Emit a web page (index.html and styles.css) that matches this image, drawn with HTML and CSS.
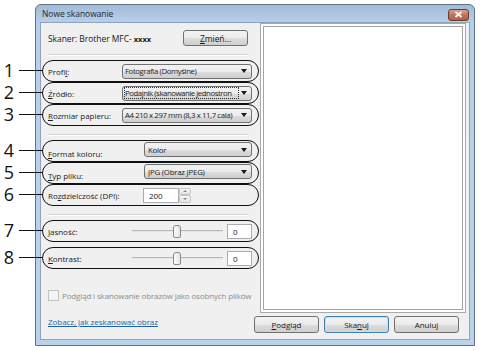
FILE: index.html
```html
<!DOCTYPE html>
<html>

<head>
    <title>Nowe skanowanie</title>
    <link rel="stylesheet" href="styles.css">
</head>

<body>
    <div class="window">
        <div class="titlebar">
            <span class="title">Nowe skanowanie</span>
            <div class="close">
                <svg width="9" height="7" viewBox="0 0 9 7">
                    <path d="M1.5 1 L7.5 6 M7.5 1 L1.5 6" stroke="#fff" stroke-width="1.8" />
                </svg>
            </div>
        </div>

        <div class="client">
            <div class="settings">
                <div class="scanner">
                    <span>Skaner: Brother MFC- <b>xxxx</b></span>
                    <div class="btn change"><u>Z</u>mień...</div>
                </div>
                <div class="sep"></div>

                <div class="callout">
                    <span class="num">1</span>
                    <span class="label">Profi<u>l</u>:</span>
                    <div class="combo wide"><span class="value">Fotografia (Domyślne)</span><span class="arrow"></span></div>
                </div>
                <div class="callout">
                    <span class="num">2</span>
                    <span class="label"><u>Ź</u>ródło:</span>
                    <div class="combo wide"><span class="value focus">Podajnik (skanowanie jednostron</span><span class="arrow"></span></div>
                </div>
                <div class="callout">
                    <span class="num">3</span>
                    <span class="label"><u>R</u>ozmiar papieru:</span>
                    <div class="combo wide"><span class="value">A4 210 x 297 mm (8,3 x 11,7 cala)</span><span class="arrow"></span></div>
                </div>
                <div class="sep"></div>

                <div class="callout">
                    <span class="num">4</span>
                    <span class="label low"><u>F</u>ormat koloru:</span>
                    <div class="combo"><span class="value">Kolor</span><span class="arrow"></span></div>
                </div>
                <div class="callout">
                    <span class="num">5</span>
                    <span class="label low"><u>T</u>yp pliku:</span>
                    <div class="combo"><span class="value">JPG (Obraz JPEG)</span><span class="arrow"></span></div>
                </div>
                <div class="callout">
                    <span class="num">6</span>
                    <span class="label">Ro<u>z</u>dzielczość (DPI):</span>
                    <div class="spin">
                        <div class="textbox">200</div>
                        <div class="spin-btns">
                            <div class="spin-btn"><span class="up"></span></div>
                            <div class="spin-btn"><span class="down"></span></div>
                        </div>
                    </div>
                </div>
                <div class="sep"></div>

                <div class="callout">
                    <span class="num">7</span>
                    <span class="label"><u>J</u>asność:</span>
                    <div class="slider"><span class="thumb"></span></div>
                    <div class="textbox small">0</div>
                </div>
                <div class="callout gap">
                    <span class="num">8</span>
                    <span class="label"><u>K</u>ontrast:</span>
                    <div class="slider"><span class="thumb"></span></div>
                    <div class="textbox small">0</div>
                </div>

                <div class="check">
                    <span class="box"></span>
                    <span>Pod<u>g</u>ląd i skanowanie obrazów jako osobnych plików</span>
                </div>
                <div class="link">Zobacz, jak zeskanować obraz</div>
            </div>

            <div class="side">
                <div class="preview">
                    <div class="preview-inner"></div>
                </div>
                <div class="actions">
                    <div class="btn"><u>P</u>odgląd</div>
                    <div class="btn default">Ska<u>n</u>uj</div>
                    <div class="btn">Anuluj</div>
                </div>
            </div>
        </div>
    </div>
</body>

</html>
```

FILE: styles.css
```css
body {
    margin: 0;
    width: 500px;
    height: 350px;
    background: #fff;
    font-family: "Open Sans", sans-serif;
    font-size: 8px;
    letter-spacing: -0.05px;
    color: #1a1a1a;
    overflow: hidden;
}

u {
    text-decoration: underline;
}

/* window frame */

.window {
    margin: 4px 0 0 35px;
    width: 440px;
    height: 342px;
    box-sizing: border-box;
    border: 1px solid #5f7186;
    border-radius: 6px 6px 0 0;
    padding: 0 4px 5px 4px;
    background: linear-gradient(#a4bdd7, #b7cfe8 18px, #bad2eb);
    display: flex;
    flex-direction: column;
}

.titlebar {
    height: 17px;
    display: flex;
    align-items: center;
    justify-content: space-between;
}

.title {
    padding-left: 2px;
    font-size: 8.5px;
    color: #1c2a3a;
}

.close {
    width: 19px;
    height: 10px;
    margin: 2px 1px 0 0;
    border: 1px solid #6b3a2c;
    border-radius: 3px;
    background: linear-gradient(#d9a592, #bd735d 50%, #ab6049);
    display: flex;
    align-items: center;
    justify-content: center;
}

.client {
    flex: 1;
    display: flex;
    background: #f0f0f0;
    border: 1px solid #8ea4bb;
}

/* left column */

.settings {
    width: 217px;
    display: flex;
    flex-direction: column;
    padding-left: 1px;
}

.scanner {
    display: flex;
    align-items: center;
    justify-content: space-between;
    margin: 7px 11px 0 6px;
    height: 16px;
    font-size: 8.5px;
}

.scanner b {
    font-weight: 700;
    font-size: 7.5px;
}

.sep {
    margin: 8px 10px 4px 6px;
    border-top: 1px solid #d5d5d5;
    border-bottom: 1px solid #fff;
}

.callout {
    position: relative;
    height: 22px;
    box-sizing: border-box;
    border: 1.5px solid #111;
    border-radius: 11px;
    display: flex;
    align-items: center;
    padding: 0 6px 0 5px;
}

.callout.gap {
    margin-top: 5px;
}

.callout::before {
    content: "";
    position: absolute;
    left: -24px;
    width: 23px;
    top: 9px;
    border-top: 1.5px solid #111;
}

.num {
    position: absolute;
    left: -43px;
    width: 18px;
    top: -4px;
    text-align: center;
    font-size: 18px;
    line-height: 26px;
    letter-spacing: 0;
    color: #111;
}

.label {
    flex: 1;
    white-space: nowrap;
}

.label.low {
    padding-top: 5px;
}

/* controls */

.btn {
    width: 65px;
    height: 17px;
    box-sizing: border-box;
    border: 1px solid #707070;
    border-radius: 3px;
    background: linear-gradient(#f2f2f2, #ebebeb 50%, #dddddd 51%, #cfcfcf);
    display: flex;
    align-items: center;
    justify-content: center;
}

.btn.change {
    height: 16px;
}

.btn.default {
    border-color: #3c7fb1;
    box-shadow: inset 0 0 0 1px #bde4f8;
}

.combo {
    width: 108px;
    height: 15px;
    box-sizing: border-box;
    border: 1px solid #707070;
    border-radius: 3px;
    background: linear-gradient(#f2f2f2, #ebebeb 50%, #dddddd 51%, #cfcfcf);
    display: flex;
    align-items: center;
    padding: 0 4px 0 3px;
    margin-top: -3px;
    font-size: 7.8px;
    letter-spacing: -0.2px;
}

.combo.wide {
    width: 130px;
    margin-top: 0;
    padding-left: 2px;
    letter-spacing: -0.4px;
}

.value {
    flex: 1;
    white-space: nowrap;
    overflow: hidden;
}

.value.focus {
    outline: 1px dotted #333;
    margin-right: 1px;
    letter-spacing: -0.45px;
}

.arrow {
    width: 0;
    height: 0;
    margin-left: 2px;
    border-left: 3px solid transparent;
    border-right: 3px solid transparent;
    border-top: 4px solid #1a1a1a;
}

.textbox {
    height: 15px;
    box-sizing: border-box;
    background: #fff;
    border: 1px solid #abadb3;
    display: flex;
    align-items: center;
    padding-left: 5px;
}

.spin {
    display: flex;
    width: 48px;
    margin-right: 61px;
}

.spin .textbox {
    flex: 1;
}

.spin-btns {
    width: 12px;
    display: flex;
    flex-direction: column;
}

.spin-btn {
    flex: 1;
    border: 1px solid #c4c4c4;
    border-radius: 2px;
    background: linear-gradient(#f7f7f7, #e3e3e3);
    display: flex;
    align-items: center;
    justify-content: center;
}

.up,
.down {
    width: 0;
    height: 0;
    border-left: 2px solid transparent;
    border-right: 2px solid transparent;
}

.up {
    border-bottom: 2px solid #888;
}

.down {
    border-top: 2px solid #888;
}

.slider {
    position: relative;
    width: 91px;
    height: 12px;
    margin-right: 4px;
}

.slider::before {
    content: "";
    position: absolute;
    left: 0;
    right: 0;
    top: 5px;
    border-top: 1px solid #b8b8b8;
    border-bottom: 1px solid #e6e6e6;
}

.thumb {
    position: absolute;
    left: 41px;
    top: 0;
    width: 6px;
    height: 11px;
    border: 1px solid #8a8a8a;
    border-radius: 3px 3px 2px 2px;
    background: linear-gradient(90deg, #fdfdfd, #e4e4e4);
}

.textbox.small {
    width: 25px;
}

.check {
    display: flex;
    align-items: center;
    gap: 3px;
    margin: 21px 0 0 6px;
    color: #8d8d8d;
    white-space: nowrap;
    letter-spacing: -0.15px;
}

.box {
    width: 9px;
    height: 9px;
    border: 1px solid #c2c2c2;
    background: #f4f4f4;
}

.link {
    margin: 15px 0 0 6px;
    color: #1c63a8;
    text-decoration: underline;
}

/* right column */

.side {
    flex: 1;
    display: flex;
    flex-direction: column;
}

.preview {
    margin: 0 3px 0 1px;
    height: 290px;
    box-sizing: border-box;
    border: 1px solid #a9a9a9;
    padding: 2px;
    background: #fff;
}

.preview-inner {
    height: 100%;
    box-sizing: border-box;
    border: 1px solid #a3a3a3;
}

.actions {
    display: flex;
    gap: 5px;
    margin: 3px 0 0 -5px;
}
```
